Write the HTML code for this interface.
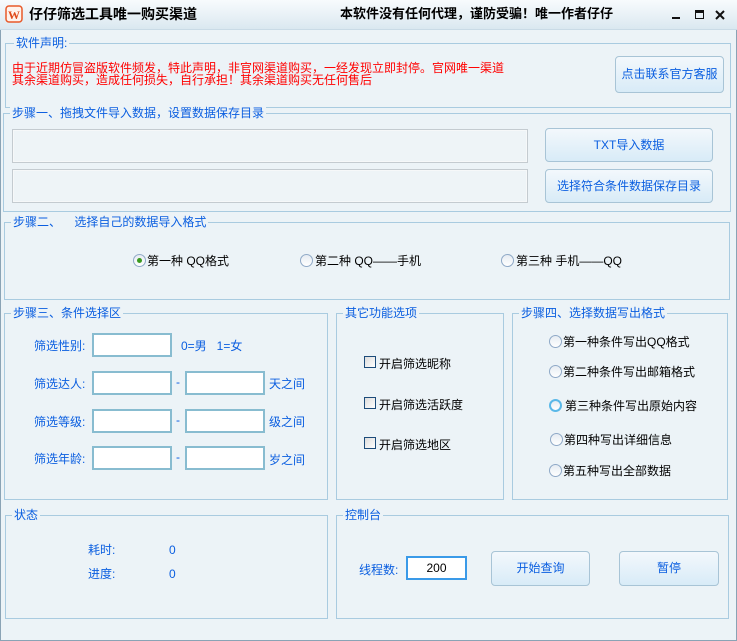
<!DOCTYPE html>
<html><head><meta charset="utf-8"><style>
*{margin:0;padding:0;box-sizing:border-box}
body{width:737px;height:641px;overflow:hidden;background:#eaf2f6;font-family:"Liberation Sans","Noto Sans CJK SC","WenQuanYi Zen Hei",sans-serif;font-size:12px;position:relative}
.win{position:absolute;left:0;top:0;width:737px;height:641px;border:1px solid #8aa3b5;border-radius:4px 4px 0 0;background:#ecf3f7}
.title{position:absolute;left:0;top:0;width:737px;height:30px;background:linear-gradient(#f8fbfd,#dae8f0);border-bottom:1px solid #c9dbe6}
.t{position:absolute;white-space:nowrap;line-height:14px}
.box{position:absolute;border:1px solid #a9cbe0}
.lg{position:absolute;top:-8px;left:8px;background:#ecf3f7;color:#0a5ee0;padding:0 2px;white-space:nowrap;line-height:14px;font-size:12px}
.blue{color:#0a5ee0}
.inp{position:absolute;background:#fff;border:2px solid #88bcd0}
.tf{position:absolute;background:#eef4f7;border:1px solid #c4cbd0;box-shadow:inset 0 0 0 1px #f6f8f9}
.btn{position:absolute;border:1px solid #a8c4d6;border-radius:4px;background:linear-gradient(#f3f8fc,#d8ebf7);color:#0a5ee0;text-align:center}
.rad{position:absolute;width:13px;height:13px;border-radius:50%;border:1px solid #8fa9c7;background:linear-gradient(#e6ecf2,#fff)}
.cb{position:absolute;width:12px;height:12px;border:1px solid #1c4b7a;background:linear-gradient(135deg,#dcdcdc,#fff)}
</style></head><body>
<div class="win"></div>
<div class="title"></div>
<svg style="position:absolute;left:5px;top:5px" width="18" height="18" viewBox="0 0 18 18"><rect x="1" y="1" width="16" height="16" rx="3" fill="#fff3ec" stroke="#e85a2a" stroke-width="1.5"/><text x="9" y="14" text-anchor="middle" font-family="Liberation Serif" font-weight="bold" font-size="12" fill="#e04a1a">W</text></svg>
<div class="t" style="left:29px;top:7px;font-size:14px;font-weight:bold;color:#000">仔仔筛选工具唯一购买渠道</div>
<div class="t" style="left:340px;top:7px;font-size:13px;font-weight:bold;color:#000">本软件没有任何代理，谨防受骗！唯一作者仔仔</div>
<div style="position:absolute;left:672px;top:17px;width:8px;height:2px;background:#111"></div>
<div style="position:absolute;left:695px;top:10px;width:9px;height:9px;border:1px solid #111;border-top:3px solid #111"></div>
<svg style="position:absolute;left:715px;top:10px" width="10" height="10" viewBox="0 0 10 10"><path d="M1 1L9 9M9 1L1 9" stroke="#111" stroke-width="2"/></svg>

<div class="box" style="left:5px;top:43px;width:726px;height:65px"><div class="lg">软件声明:</div></div>
<div class="t" style="left:12px;top:61px;color:#f00;font-size:12px">由于近期仿冒盗版软件频发，特此声明，非官网渠道购买，一经发现立即封停。官网唯一渠道</div>
<div class="t" style="left:12px;top:73px;color:#f00;font-size:12px">其余渠道购买，造成任何损失，自行承担！其余渠道购买无任何售后</div>
<div class="btn" style="left:615px;top:56px;width:109px;height:37px;line-height:35px">点击联系官方客服</div>

<div class="box" style="left:3px;top:113px;width:728px;height:99px"><div class="lg" style="left:6px">步骤一、拖拽文件导入数据，设置数据保存目录</div></div>
<div class="tf" style="left:12px;top:129px;width:516px;height:34px"></div>
<div class="tf" style="left:12px;top:169px;width:516px;height:34px"></div>
<div class="btn" style="left:545px;top:128px;width:168px;height:34px;line-height:32px">TXT导入数据</div>
<div class="btn" style="left:545px;top:169px;width:168px;height:34px;line-height:32px">选择符合条件数据保存目录</div>

<div class="box" style="left:4px;top:222px;width:726px;height:78px"><div class="lg" style="left:6px">步骤二、&nbsp;&nbsp;&nbsp;&nbsp;选择自己的数据导入格式</div></div>
<div class="rad" style="left:133px;top:254px"><div style="position:absolute;left:3px;top:3px;width:5px;height:5px;border-radius:50%;background:#3a9a20"></div></div>
<div class="t" style="left:147px;top:254px">第一种 QQ格式</div>
<div class="rad" style="left:300px;top:254px"></div>
<div class="t" style="left:315px;top:254px">第二种 QQ——手机</div>
<div class="rad" style="left:501px;top:254px"></div>
<div class="t" style="left:516px;top:254px">第三种 手机——QQ</div>

<div class="box" style="left:4px;top:313px;width:324px;height:187px"><div class="lg" style="left:6px">步骤三、条件选择区</div></div>
<div class="t blue" style="left:34px;top:339px">筛选性别:</div>
<div class="inp" style="left:92px;top:333px;width:80px;height:24px"></div>
<div class="t blue" style="left:181px;top:339px">0=男&nbsp;&nbsp;&nbsp;1=女</div>
<div class="t blue" style="left:34px;top:377px">筛选达人:</div>
<div class="inp" style="left:92px;top:371px;width:80px;height:24px"></div>
<div class="t blue" style="left:176px;top:375px">-</div>
<div class="inp" style="left:185px;top:371px;width:80px;height:24px"></div>
<div class="t blue" style="left:269px;top:377px">天之间</div>
<div class="t blue" style="left:34px;top:415px">筛选等级:</div>
<div class="inp" style="left:92px;top:409px;width:80px;height:24px"></div>
<div class="t blue" style="left:176px;top:413px">-</div>
<div class="inp" style="left:185px;top:409px;width:80px;height:24px"></div>
<div class="t blue" style="left:269px;top:415px">级之间</div>
<div class="t blue" style="left:34px;top:452px">筛选年龄:</div>
<div class="inp" style="left:92px;top:446px;width:80px;height:24px"></div>
<div class="t blue" style="left:176px;top:450px">-</div>
<div class="inp" style="left:185px;top:446px;width:80px;height:24px"></div>
<div class="t blue" style="left:269px;top:453px">岁之间</div>

<div class="box" style="left:336px;top:313px;width:168px;height:187px"><div class="lg" style="left:6px">其它功能选项</div></div>
<div class="cb" style="left:364px;top:356px"></div><div class="t" style="left:379px;top:357px">开启筛选昵称</div>
<div class="cb" style="left:364px;top:397px"></div><div class="t" style="left:379px;top:398px">开启筛选活跃度</div>
<div class="cb" style="left:364px;top:437px"></div><div class="t" style="left:379px;top:438px">开启筛选地区</div>

<div class="box" style="left:512px;top:313px;width:216px;height:187px"><div class="lg" style="left:6px">步骤四、选择数据写出格式</div></div>
<div class="rad" style="left:549px;top:335px"></div><div class="t" style="left:563px;top:335px">第一种条件写出QQ格式</div>
<div class="rad" style="left:549px;top:365px"></div><div class="t" style="left:563px;top:365px">第二种条件写出邮箱格式</div>
<div class="rad" style="left:549px;top:399px;border:2px solid #5ab8e8"></div><div class="t" style="left:565px;top:399px">第三种条件写出原始内容</div>
<div class="rad" style="left:550px;top:433px"></div><div class="t" style="left:564px;top:433px">第四种写出详细信息</div>
<div class="rad" style="left:549px;top:464px"></div><div class="t" style="left:563px;top:464px">第五种写出全部数据</div>

<div class="box" style="left:5px;top:515px;width:323px;height:104px"><div class="lg" style="left:6px">状态</div></div>
<div class="t blue" style="left:88px;top:543px">耗时:</div><div class="t blue" style="left:169px;top:543px">0</div>
<div class="t blue" style="left:88px;top:567px">进度:</div><div class="t blue" style="left:169px;top:567px">0</div>

<div class="box" style="left:336px;top:515px;width:393px;height:104px"><div class="lg" style="left:6px">控制台</div></div>
<div class="t blue" style="left:359px;top:563px">线程数:</div>
<div style="position:absolute;left:406px;top:556px;width:61px;height:24px;background:#fff;border:2px solid #3a9ae8;text-align:center;line-height:20px">200</div>
<div class="btn" style="left:491px;top:551px;width:99px;height:35px;line-height:33px">开始查询</div>
<div class="btn" style="left:619px;top:551px;width:100px;height:35px;line-height:33px">暂停</div>
</body></html>
